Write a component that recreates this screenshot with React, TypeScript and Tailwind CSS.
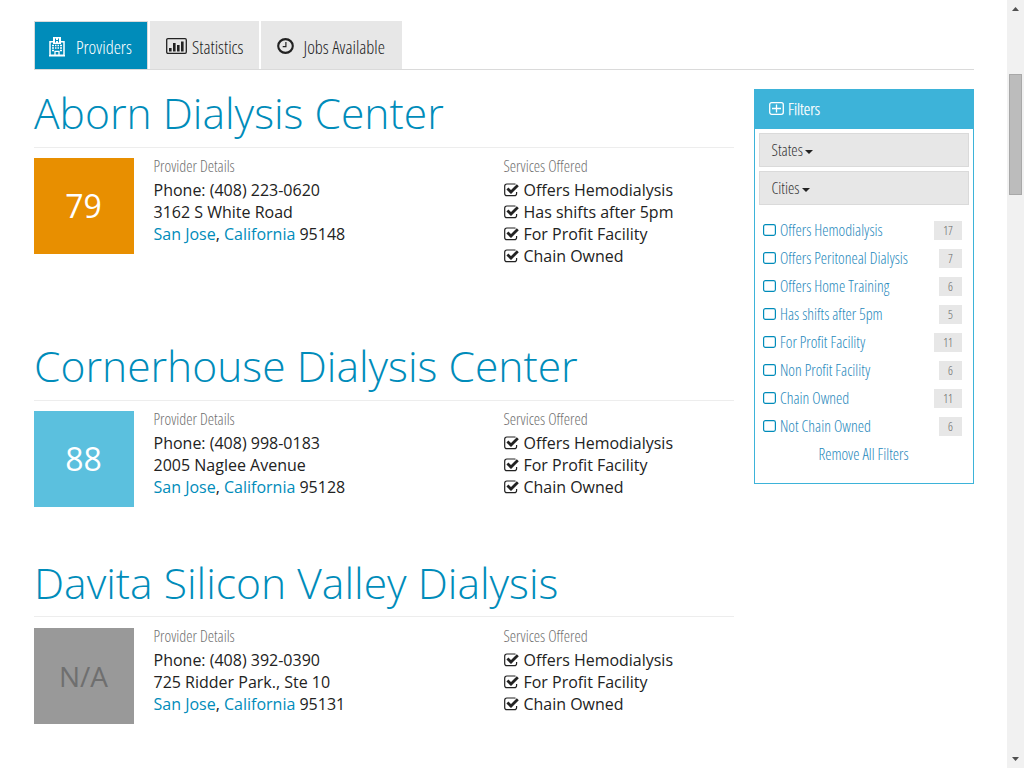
import React from "react";

const condensed = "[font-stretch:75%] font-light";

const providers = [
  {
    name: "Aborn Dialysis Center", score: "79", tile: "bg-[#e88f00] text-white text-[32px]", height: "h-[253px]", title: "h-[59px]", body: "pt-[10px]",
    phone: "(408) 223-0620", street: "3162 S White Road", zip: "95148",
    services: ["Offers Hemodialysis", "Has shifts after 5pm", "For Profit Facility", "Chain Owned"],
  },
  {
    name: "Cornerhouse Dialysis Center", score: "88", tile: "bg-[#5bc0de] text-white text-[32px]", height: "h-[217px]", title: "h-[59px]", body: "pt-[10px]",
    phone: "(408) 998-0183", street: "2005 Naglee Avenue", zip: "95128",
    services: ["Offers Hemodialysis", "For Profit Facility", "Chain Owned"],
  },
  {
    name: "Davita Silicon Valley Dialysis", score: "N/A", tile: "bg-[#999999] text-[#6f6f6f] text-[28px]", height: "h-[217px]", title: "h-[58px]", body: "pt-[11px]",
    phone: "(408) 392-0390", street: "725 Ridder Park., Ste 10", zip: "95131",
    services: ["Offers Hemodialysis", "For Profit Facility", "Chain Owned"],
  },
];

const filters: [string, number][] = [
  ["Offers Hemodialysis", 17],
  ["Offers Peritoneal Dialysis", 7],
  ["Offers Home Training", 6],
  ["Has shifts after 5pm", 5],
  ["For Profit Facility", 11],
  ["Non Profit Facility", 6],
  ["Chain Owned", 11],
  ["Not Chain Owned", 6],
];

function HospitalIcon() {
  return (
    <svg className="h-5 w-4 shrink-0" viewBox="0 0 16 20" fill="none" stroke="currentColor">
      <path d="M4.5 4.8H1v13.4h14V4.8h-3.5M0 18.8h16" strokeWidth="1.5" />
      <path d="M4 0h8v7H4z" fill="currentColor" stroke="none" />
      <path d="M6.5 1.5v4M9.5 1.5v4M6.5 3.5h3" stroke="#008cba" strokeWidth="1" />
      <path d="M3 8.5h2M6 8.5h1.5M8.5 8.5H10M11 8.5h2M3 11h2M6 11h1.5M8.5 11H10M11 11h2M3 13.5h2M11 13.5h2" strokeWidth="1.6" />
      <path d="M6 18.5v-4.2h4v4.2" strokeWidth="1.3" />
    </svg>
  );
}

function ChartIcon() {
  return (
    <svg className="h-4 w-[21px] shrink-0" viewBox="0 0 21 16">
      <rect x=".7" y=".7" width="19.6" height="14.6" rx="1.2" fill="none" stroke="currentColor" strokeWidth="1.3" />
      <path d="M3 10h2.6v3.6H3zM7 5h2.6v8.6H7zM11 7h2.6v6.6H11zM15 3.5h2.6v10.1H15z" fill="currentColor" />
    </svg>
  );
}

function ClockIcon() {
  return (
    <svg className="h-4 w-[17px] shrink-0" viewBox="0 0 17 16" fill="none" stroke="currentColor">
      <ellipse cx="8.5" cy="8" rx="7.3" ry="6.9" strokeWidth="2.1" />
      <path d="M8.9 4v4.6H5.7" strokeWidth="1.2" />
    </svg>
  );
}

function CheckIcon() {
  return (
    <svg className="h-[14px] w-[15px] shrink-0" viewBox="0 0 15 14" fill="none" stroke="currentColor">
      <path d="M11.5 1.3A2 2 0 0 0 10.4 1H2.9A2.2 2.2 0 0 0 .7 3.2v7.2a2.2 2.2 0 0 0 2.2 2.2h7.5a2.2 2.2 0 0 0 2.2-2.2V9" strokeWidth="1.2" />
      <path d="M3.4 5.6 7 9.1l6.8-6.8" strokeWidth="2.8" />
    </svg>
  );
}

function BoxIcon() {
  return (
    <svg className="h-3 w-[13px] shrink-0" viewBox="0 0 13 12" fill="none" stroke="currentColor">
      <rect x=".6" y=".6" width="11.8" height="10.8" rx="1.8" strokeWidth="1.2" />
    </svg>
  );
}

function PlusBoxIcon() {
  return (
    <svg className="h-[13px] w-[15px] shrink-0" viewBox="0 0 15 13" fill="none" stroke="currentColor">
      <rect x=".7" y=".7" width="13.6" height="11.6" rx="2" strokeWidth="1.3" />
      <path d="M3 6.5h9M7.5 2.5v8" strokeWidth="1.3" />
    </svg>
  );
}

function Caret() {
  return (
    <svg className="mt-[3px] h-1 w-2" viewBox="0 0 8 4">
      <path d="M0 0h8L4 4z" fill="#222" />
    </svg>
  );
}

function Provider({ p }: { p: (typeof providers)[number] }) {
  return (
    <section className={p.height}>
      <h2 className={`border-b border-[#ededed] text-[42.6px] leading-[46px] font-light whitespace-nowrap text-[#008cba] ${p.title}`}>
        {p.name}
      </h2>
      <div className={`flex ${p.body}`}>
        <div className={`flex h-24 w-[100px] items-center justify-center pr-px pb-px ${p.tile}`}>
          {p.score}
        </div>
        <div className="ml-[19.5px] w-[350px] text-[16px] leading-[22px]">
          <div className={`h-[21px] text-[15.9px] leading-[16px] text-[#6f6f6f] ${condensed}`}>Provider Details</div>
          <div>Phone: {p.phone}</div>
          <div>{p.street}</div>
          <div>
            <a className="text-[#008cba]">San Jose</a>, <a className="text-[#008cba]">California</a> {p.zip}
          </div>
        </div>
        <div className="text-[15.97px] leading-[22px]">
          <div className={`h-[21px] text-[15.9px] leading-[16px] text-[#6f6f6f] ${condensed}`}>Services Offered</div>
          {p.services.map((s) => (
            <div key={s} className="flex items-center gap-[5px]">
              <CheckIcon />
              {s}
            </div>
          ))}
        </div>
      </div>
    </section>
  );
}

export default function App() {
  return (
    <div className="flex h-[768px] w-[1024px] overflow-hidden bg-white font-['Open_Sans','Noto_Sans',sans-serif] text-[#222]">
      <main className="flex-1 pt-[21px] pl-[34px]">
        <nav className={`flex h-[49px] w-[940px] gap-0.5 border-b border-[#dadada] text-[18.3px] ${condensed}`}>
          <div className="flex w-[114px] items-center border border-b-0 border-[#dadada] bg-[#008cba] pt-0.5 pl-[14px] text-white">
            <HospitalIcon />
            <span className="ml-[11px] pt-px">Providers</span>
          </div>
          <div className="flex w-[109px] items-center bg-[#e7e7e7] pt-0.5 pl-4">
            <ChartIcon />
            <span className="ml-[5px] pt-px">Statistics</span>
          </div>
          <div className="flex w-[141px] items-center bg-[#e7e7e7] pt-0.5 pl-4">
            <ClockIcon />
            <span className="ml-[9.5px] pt-px">Jobs Available</span>
          </div>
        </nav>
        <div className="flex">
          <div className="w-[700px] pt-[19px]">
            {providers.map((p) => (
              <Provider key={p.name} p={p} />
            ))}
          </div>
          <aside className={`mt-[19px] ml-5 h-[395px] w-[220px] border border-[#3db3d9] text-[16px] ${condensed}`}>
            <div className="flex h-[39px] items-center gap-1 bg-[#3db3d9] pb-0.5 pl-[14px] text-white">
              <PlusBoxIcon />
              <span className="pt-0.5 text-[16.4px] [-webkit-text-stroke:0.25px_white]">Filters</span>
            </div>
            <div className="space-y-1 px-1 pt-1">
              {["States", "Cities"].map((label) => (
                <div key={label} className="flex h-[34px] items-center gap-[2px] border border-[#dadada] bg-[#e7e7e7] pl-[11.5px] text-[#333]">
                  {label}
                  <Caret />
                </div>
              ))}
            </div>
            <div className="pt-[11px] pr-[11px] pl-2 text-[15.85px] text-[#008cba]">
              {filters.map(([label, count]) => (
                <div key={label} className="flex h-7 items-center">
                  <BoxIcon />
                  <span className="ml-1 h-7 flex-1 leading-[28.5px] text-[#2688bb]">{label}</span>
                  <span className="flex h-[19px] items-center bg-[#e7e7e7] px-[9px] pt-px text-[12px] text-[#666]">{count}</span>
                </div>
              ))}
              <div className="h-7 pl-[2px] text-center leading-7 text-[#2688bb]">Remove All Filters</div>
            </div>
          </aside>
        </div>
      </main>
      <div className="flex w-[17px] flex-col items-center justify-between bg-[#f1f1f1] py-[7px]">
        <svg className="h-1 w-[7px]" viewBox="0 0 7 4"><path d="M3.5 0 7 4H0z" fill="#505050" /></svg>
        <div className="mt-[63px] mb-auto h-[121px] w-[13px] border border-[#a8a8a8] bg-[#bcbcbc]" />
        <svg className="h-1 w-[7px]" viewBox="0 0 7 4"><path d="M3.5 4 0 0h7z" fill="#505050" /></svg>
      </div>
    </div>
  );
}
